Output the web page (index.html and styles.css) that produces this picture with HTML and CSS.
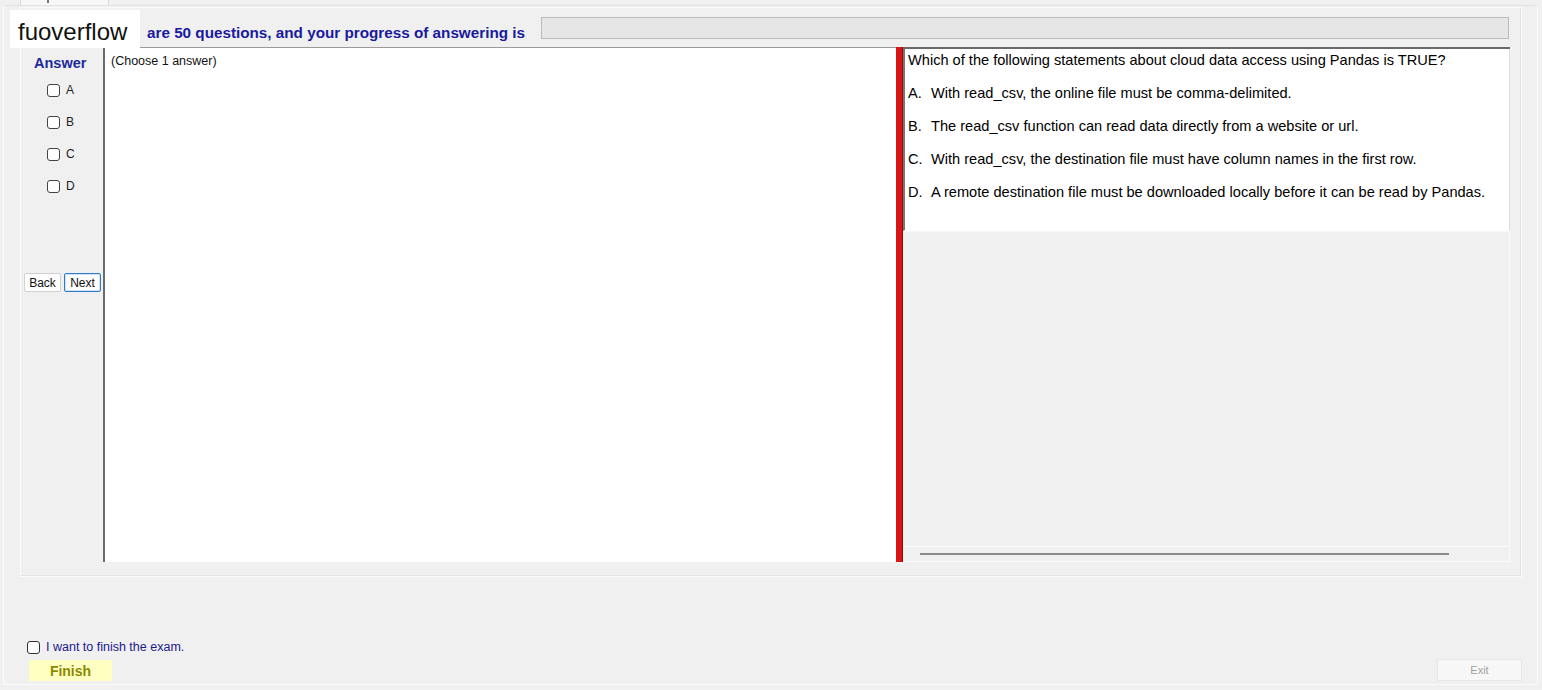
FILE: index.html
```html
<!DOCTYPE html>
<html lang="en">
<head>
  <meta charset="UTF-8">
  <title>Exam</title>
  <link rel="stylesheet" href="styles.css">
</head>
<body>
  <div class="tabs">
    <div class="tab"><span class="tab-mark"></span></div>
  </div>

  <div class="window">
    <div class="panel">
      <div class="head">
        <span class="head-text">are 50 questions, and your progress of answering is</span>
        <div class="progress"></div>
      </div>

      <div class="main">
        <div class="side">
          <div class="side-title">Answer</div>
          <ul class="choices">
            <li><span class="box"></span>A</li>
            <li><span class="box"></span>B</li>
            <li><span class="box"></span>C</li>
            <li><span class="box"></span>D</li>
          </ul>
          <div class="nav">
            <button class="nav-btn">Back</button>
            <button class="nav-btn next">Next</button>
          </div>
        </div>

        <div class="left-pane">(Choose 1 answer)</div>
        <div class="splitter"></div>

        <div class="right-pane">
          <div class="question">
            <p>Which of the following statements about cloud data access using Pandas is TRUE?</p>
            <p><span class="opt">A.</span>With read_csv, the online file must be comma-delimited.</p>
            <p><span class="opt">B.</span>The read_csv function can read data directly from a website or url.</p>
            <p><span class="opt">C.</span>With read_csv, the destination file must have column names in the first row.</p>
            <p><span class="opt">D.</span>A remote destination file must be downloaded locally before it can be read by Pandas.</p>
          </div>
          <div class="scroll-area">
            <div class="hscroll"><div class="hbar"></div></div>
          </div>
        </div>
      </div>
    </div>

    <div class="footer">
      <div class="finish-group">
        <label class="finish-check"><span class="box"></span>I want to finish the exam.</label>
        <button class="finish-btn">Finish</button>
      </div>
      <button class="exit-btn">Exit</button>
    </div>
  </div>

  <div class="logo">fuoverflow</div>
</body>
</html>
```

FILE: styles.css
```css
body {
  margin: 0;
  height: 690px;
  overflow: hidden;
  background-color: #f0f0f0;
  font-family: 'Liberation Sans', Arial, sans-serif;
  color: #000;
}

/* tab strip on top */
.tabs {
  height: 5px;
  overflow: hidden;
}

.tab {
  width: 89px;
  height: 5px;
  margin-left: 20px;
  background-color: #f7f7f7;
  border-left: 1px solid #dadada;
  border-right: 1px solid #dadada;
  box-sizing: border-box;
}

.tab-mark {
  display: block;
  width: 2px;
  height: 3px;
  margin-left: 26px;
  background-color: #777;
}

.window {
  margin: 0 4px 0 3px;
  height: 680px;
  box-sizing: border-box;
  border: 1px solid #fbfbfb;
  border-top-color: #e2e2e2;
  padding: 1px 0 0 16px;
}

.panel {
  width: 1502px;
  height: 570px;
  box-sizing: border-box;
  border: 1px solid #fafafa;
  box-shadow: inset -1px -1px 0 #e2e2e2;
}

.head {
  display: flex;
  align-items: flex-start;
  height: 22px;
  margin-top: 9px;
  padding-left: 126px;
  padding-right: 12px;
}

.head-text {
  font-size: 15.25px;
  line-height: 15px;
  margin-top: 8px;
  font-weight: bold;
  color: #1a1a9e;
  white-space: nowrap;
}

.progress {
  flex: 1;
  height: 22px;
  margin-left: 16px;
  box-sizing: border-box;
  background-color: #e6e6e6;
  border: 1px solid #bcbcbc;
}

.main {
  display: flex;
  height: 515px;
  margin-top: 8px;
  padding-left: 1px;
}

/* answer column */
.side {
  width: 81px;
  padding-top: 9px;
  box-sizing: border-box;
}

.side-title {
  font-size: 14.5px;
  font-weight: bold;
  color: #1c2a9c;
  line-height: 15px;
  padding-left: 12px;
}

.choices {
  list-style: none;
  margin: 3px 0 0;
  padding: 0 0 0 25px;
}

.choices li {
  display: flex;
  align-items: center;
  height: 32px;
  font-size: 12px;
  color: #222;
}

.box {
  display: inline-block;
  width: 11px;
  height: 11px;
  border: 1px solid #444;
  border-radius: 3px;
  background-color: #fff;
  margin-right: 6px;
}

.nav {
  display: flex;
  gap: 3px;
  margin-top: 71px;
  padding-left: 2px;
}

.nav-btn {
  width: 37px;
  height: 19px;
  padding: 0;
  font-family: 'Liberation Sans', Arial, sans-serif;
  font-size: 12px;
  background-color: #fdfdfd;
  border: 1px solid #d0d0d0;
  border-radius: 2px;
  color: #111;
}

.nav-btn.next {
  border-color: #2e7bc8;
  box-shadow: inset 0 0 0 1px #cfe3f5;
}

.left-pane {
  width: 793px;
  box-sizing: border-box;
  background-color: #fff;
  border-left: 2px solid #6a6a6a;
  border-top: 1px solid #9a9a9a;
  padding: 6px 0 0 6px;
  font-size: 12.5px;
  color: #111;
}

.splitter {
  width: 6px;
  background-color: #d91414;
  border-right: 1px solid #8a0c0c;
}

/* question column */
.right-pane {
  width: 607px;
  display: flex;
  flex-direction: column;
  border-top: 2px solid #6a6a6a;
}

.question {
  height: 182px;
  box-sizing: border-box;
  background-color: #fff;
  border-left: 2px solid #777;
  border-right: 1px solid #dcdcdc;
  border-bottom: 1px solid #fff;
  padding: 3px 0 0 3px;
  font-size: 14.6px;
}

.question p {
  margin: 0 0 17px;
  line-height: 16px;
  white-space: nowrap;
}

.opt {
  display: inline-block;
  width: 23px;
}

.scroll-area {
  flex: 1;
  display: flex;
  flex-direction: column;
  justify-content: flex-end;
  border-right: 1px solid #fafafa;
  border-top: 1px solid #f8f8f8;
}

.hscroll {
  height: 16px;
  border-top: 1px solid #fbfbfb;
  border-bottom: 1px solid #fbfbfb;
  padding: 6px 0 0 17px;
  box-sizing: border-box;
}

.hbar {
  width: 529px;
  height: 2px;
  background-color: #8a8a8a;
}

/* bottom bar */
.footer {
  display: flex;
  justify-content: space-between;
  align-items: flex-end;
  margin-top: 63px;
  margin-left: -16px;
  padding-right: 15px;
}

.finish-group {
  display: flex;
  flex-direction: column;
  align-items: flex-start;
}

.finish-check {
  display: flex;
  align-items: center;
  height: 14px;
  margin-left: 23px;
  font-size: 12.5px;
  color: #1a1a8c;
}

.finish-check .box {
  border-color: #333;
  margin-right: 6px;
}

.finish-btn {
  width: 83px;
  height: 21px;
  margin: 6px 0 0 25px;
  padding: 0;
  border: none;
  background-color: #ffffc2;
  font-family: 'Liberation Sans', Arial, sans-serif;
  font-size: 14px;
  font-weight: bold;
  color: #8a8a00;
}

.exit-btn {
  width: 85px;
  height: 22px;
  padding: 0;
  background-color: #f7f7f7;
  border: 1px solid #e6e6e6;
  font-family: 'Liberation Sans', Arial, sans-serif;
  font-size: 11px;
  color: #a0a0a0;
}

/* watermark over the header */
.logo {
  position: absolute;
  left: 10px;
  top: 10px;
  width: 130px;
  height: 38px;
  background-color: #fff;
  font-size: 24px;
  line-height: 43px;
  padding-left: 8px;
  box-sizing: border-box;
  color: #111;
}
```
